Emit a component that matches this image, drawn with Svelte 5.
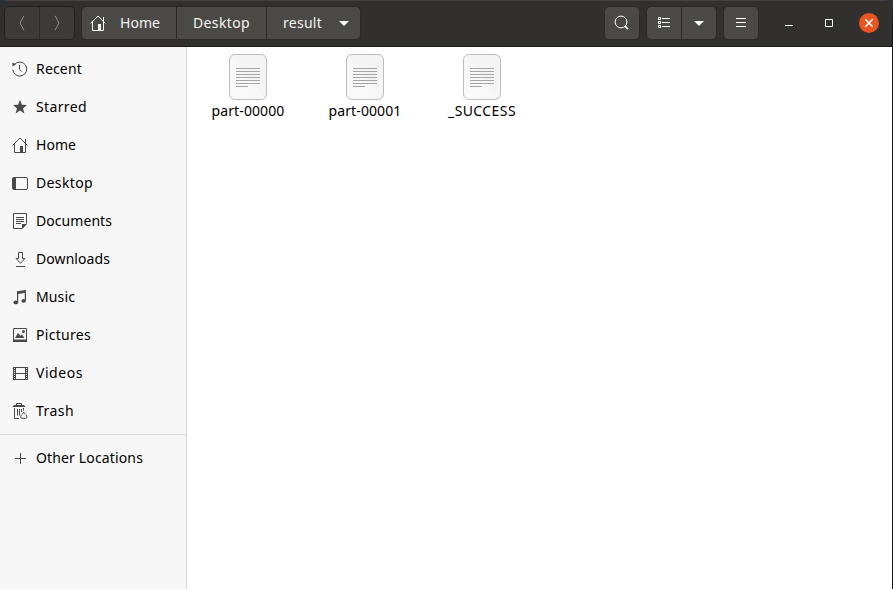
<script>
  const places = [
    { name: 'Recent', icon: 'recent', width: 46 },
    { name: 'Starred', icon: 'star', width: 51 },
    { name: 'Home', icon: 'home', width: 40 },
    { name: 'Desktop', icon: 'desktop', width: 57 },
    { name: 'Documents', icon: 'documents', width: 76 },
    { name: 'Downloads', icon: 'downloads', width: 74 },
    { name: 'Music', icon: 'music', width: 39 },
    { name: 'Pictures', icon: 'pictures', width: 55 },
    { name: 'Videos', icon: 'videos', width: 47 },
    { name: 'Trash', icon: 'trash', width: 38 }
  ];

  const files = [
    { name: 'part-00000', width: 73 },
    { name: 'part-00001', width: 73 },
    { name: '_SUCCESS', width: 68 }
  ];

  // Spreads the letters of a label evenly over the given width.
  function fit(node, width) {
    const natural = node.getBoundingClientRect().width;
    const gap = (width - natural) / node.textContent.length;
    node.style.letterSpacing = `${gap}px`;
  }
</script>

{#snippet homeIcon()}
  <svg width="16" height="16" viewBox="0 0 16 16" fill="none" stroke="currentColor">
    <path d="M.6 8.4 8 1l7.4 7.4M2.5 7v8.5H8M13.5 7v8.5H11M13.5 2v4" />
    <path d="M8 9h3v7H8z" fill="currentColor" stroke="none" />
  </svg>
{/snippet}

{#snippet icon(name)}
  {#if name === 'home'}
    {@render homeIcon()}
  {:else}
    <svg width="16" height="16" viewBox="0 0 16 16" fill="none" stroke="currentColor">
      {#if name === 'recent'}
        <path d="M2.3 3.700A7 7 0 1 1 .8 8.500M7.500 4v4.300l2.200 2.300" />
        <path d="M.3 1.800 4.400 3 .5 5.500z" fill="currentColor" stroke="none" />
      {:else if name === 'star'}
        <path d="m8 1 1.9 4.8 5.1.3-4 3.300 1.400 5L8 11.600l-4.400 2.800 1.400-5-4-3.300 5.100-.300z" fill="currentColor" stroke="none" />
      {:else if name === 'desktop'}
        <rect x=".5" y="2.500" width="15" height="12" rx="1.500" />
        <path d="M1 3h3v11H1z" fill="currentColor" stroke="none" />
      {:else if name === 'documents'}
        <path d="M1.500.500h13v10l-4.500 5H1.500zM4 4.500h8M4 6.500h8M4 8.500h8M4 10.500h5" />
        <path d="M10 11h5l-5 5z" fill="currentColor" stroke="none" />
      {:else if name === 'downloads'}
        <path d="M6.500 1.500h4v6h2.300L8.500 12.300 4.200 7.500h2.300zM4 15.500h9" />
      {:else if name === 'music'}
        <path d="M5 2.300 14 1v2.700L6.200 4.900v8H5zM12.800 3H14v8.500h-1.200z" fill="currentColor" stroke="none" />
        <ellipse cx="3.800" cy="13.400" rx="2.400" ry="1.900" fill="currentColor" stroke="none" />
        <ellipse cx="11.700" cy="11.800" rx="2.300" ry="1.900" fill="currentColor" stroke="none" />
      {:else if name === 'pictures'}
        <path d="M1.500 1.500h13v13h-13z" />
        <path d="M1 12.500h14V15H1zM3 11l3-5 2.500 2.800L10 7.500l2.500 3.500z" fill="currentColor" stroke="none" />
        <circle cx="11.500" cy="4.500" r="1.500" fill="currentColor" stroke="none" />
      {:else if name === 'videos'}
        <path d="M1.500 2v13M3.500 2v13M13.500 2v13M15.500 2v13M3 2.500h11M3 8.500h11M3 14.500h11" />
        <path d="M2.500 2v13M14.500 2v13" stroke-dasharray="1 1" />
      {:else if name === 'trash'}
        <path d="M1 3.500h12M4.500 2V.500h5V2M2.500 5v10.500H7M11.500 5v2.500M5.500 6v6.500M7.500 6v6.500M9.500 6v3" />
        <path d="M2 2h10l1.500 2H.500z" fill="currentColor" stroke="none" />
        <path d="m10.200 11.200 1.600-1.900 1.600 1.900M9.700 11.700l-1 2q-.4 1.500 1.200 1.600h3.800q1.600-.1 1.200-1.600l-1-2" />
      {:else if name === 'plus'}
        <path d="M8.500 3v11M3 8.500h11" />
      {/if}
    </svg>
  {/if}
{/snippet}

{#snippet caret()}
  <svg class="caret" width="10" height="5" viewBox="0 0 10 5"><path d="M0 0h10L5 5z" fill="#fff" /></svg>
{/snippet}

<div class="backdrop">
  <div class="window">
    <header>
      <div class="group nav">
        <button aria-label="Back">
          <svg width="16" height="16" viewBox="0 0 16 16" fill="none" stroke="#929190"><path d="M10 .8 6 8l4 7.200" /></svg>
        </button>
        <button aria-label="Forward">
          <svg width="16" height="16" viewBox="0 0 16 16" fill="none" stroke="#929190"><path d="m6 .8 4 7.200-4 7.200" /></svg>
        </button>
      </div>
      <div class="group path">
        <button class="crumb-home">{@render homeIcon()}<span use:fit={40}>Home</span></button>
        <button class="crumb-desktop"><span use:fit={57}>Desktop</span></button>
        <button class="crumb-current"><span use:fit={39}>result</span>{@render caret()}</button>
      </div>
      <div class="space"></div>
      <div class="group">
        <button aria-label="Search">
          <svg width="16" height="16" viewBox="0 0 16 16" fill="none" stroke="#fff">
            <circle cx="7" cy="7" r="5.900" /><path d="m11 11.200 3 3" stroke-width="1.700" />
          </svg>
        </button>
      </div>
      <div class="group view">
        <button aria-label="List view">
          <svg width="16" height="16" viewBox="0 0 16 16" fill="none" stroke="#fff">
            <path d="M2.500 2.500h2v2h-2zM2.500 6.500h2v2h-2zM2.500 10.500h2v2h-2zM6 3.500h8M6 7.500h8M6 11.500h8" />
          </svg>
        </button>
        <button aria-label="View options">{@render caret()}</button>
      </div>
      <div class="group">
        <button aria-label="Menu">
          <svg width="16" height="16" viewBox="0 0 16 16" fill="none" stroke="#fff"><path d="M3 3.500h10M3 7.500h10M3 11.500h10" /></svg>
        </button>
      </div>
      <div class="controls">
        <svg width="10" height="10" viewBox="0 0 10 10" stroke="#fff"><path d="M1 7.500h8" /></svg>
        <svg width="10" height="10" viewBox="0 0 10 10" fill="none" stroke="#fff"><path d="M1.500 1.500h7v7h-7z" /></svg>
        <svg width="20" height="20" viewBox="0 0 20 20">
          <circle cx="10" cy="10" r="10" fill="#e95420" />
          <path d="m6.300 6.300 7.400 7.400m0-7.400-7.400 7.400" stroke="#fff" stroke-width="1.500" />
        </svg>
      </div>
    </header>
    <div class="body">
      <aside>
        <ul>
          {#each places as place}
            <li>{@render icon(place.icon)}<span use:fit={place.width}>{place.name}</span></li>
          {/each}
        </ul>
        <ul class="other">
          <li>{@render icon('plus')}<span use:fit={107}>Other Locations</span></li>
        </ul>
      </aside>
      <main>
        {#each files as file}
          <div class="file">
            <svg width="38" height="46" viewBox="0 0 38 46">
              <defs>
                <linearGradient id="paper" x1="0" y1="1" x2="1" y2="0">
                  <stop offset="0" stop-color="#fafafa" /><stop offset=".5" stop-color="#f8f8f8" />
                  <stop offset=".5" stop-color="#f5f5f5" /><stop offset="1" stop-color="#f3f3f3" />
                </linearGradient>
              </defs>
              <rect x=".5" y=".5" width="37" height="45" rx="5.500" fill="url(#paper)" stroke="#bdbdbd" />
              <path d="M7 14.500h24M7 17.500h24M7 20.500h24M7 23.500h24M7 26.500h24M7 29.500h24M7 32.500h12" stroke="#a5a5a5" />
            </svg>
            <span use:fit={file.width}>{file.name}</span>
          </div>
        {/each}
      </main>
    </div>
  </div>
</div>

<style>
  .backdrop {
    height: 589px;
    padding-right: 1px;
    box-sizing: border-box;
    background: linear-gradient(#29343d, #15161a 26px, #15161a);
    font: 14px/20px 'Noto Sans', 'Open Sans', sans-serif;
    color: #000;
  }
  .window {
    height: 100%;
    display: flex;
    flex-direction: column;
    overflow: hidden;
    border-radius: 7px 7px 0 0;
  }
  header {
    height: 47px;
    box-sizing: border-box;
    flex: none;
    display: flex;
    align-items: flex-start;
    padding: 6px 13px 0 4px;
    background: #322f2f;
    border-bottom: 1px solid #1c1a1a;
    box-shadow: inset 0 1px #444242;
    color: #f4f4f3;
  }
  svg { display: block; flex: none; }
  .group {
    display: flex;
    height: 34px;
    box-sizing: border-box;
    border: 1px solid #2b2929;
    border-radius: 5px;
    background: #4a4946;
    overflow: hidden;
    margin-right: 6px;
  }
  button {
    width: 34px;
    padding: 0;
    border: 0;
    background: none;
    color: inherit;
    font: inherit;
    display: flex;
    align-items: center;
    justify-content: center;
  }
  button + button { border-left: 1px solid #2c2a29; box-sizing: content-box; }
  .nav { background: #3c3b3a; border-color: #232121; }
  .path button { justify-content: flex-start; box-sizing: border-box; }
  .path .crumb-home { width: 94px; padding-left: 8px; gap: 14px; }
  .path .crumb-desktop { width: 90px; padding-left: 16px; }
  .path .crumb-current { width: 94px; padding-left: 16px; gap: 17px; }
  .space { flex: 1; }
  span { white-space: nowrap; }
  .controls { display: flex; align-items: center; gap: 30px; height: 34px; margin-left: 19px; }
  .controls svg:last-child { margin-left: -5px; }
  .body { flex: 1; display: flex; min-height: 0; }
  aside {
    width: 187px;
    box-sizing: border-box;
    background: #f7f7f7;
    border-right: 1px solid #d5d5d5;
    padding-top: 3px;
  }
  ul { list-style: none; margin: 0; padding: 0 0 4px; }
  li {
    height: 38px;
    display: flex;
    align-items: center;
    gap: 8px;
    padding-left: 12px;
  }
  li svg { color: #484848; }
  .other { border-top: 1px solid #d9d9d9; padding-top: 4px; }
  main { flex: 1; display: flex; align-items: flex-start; background: #fff; padding: 7px 0 0 2px; }
  .file { width: 117px; display: flex; flex-direction: column; align-items: center; }
  .file span { margin: 1px 0 0 1px; }
</style>
